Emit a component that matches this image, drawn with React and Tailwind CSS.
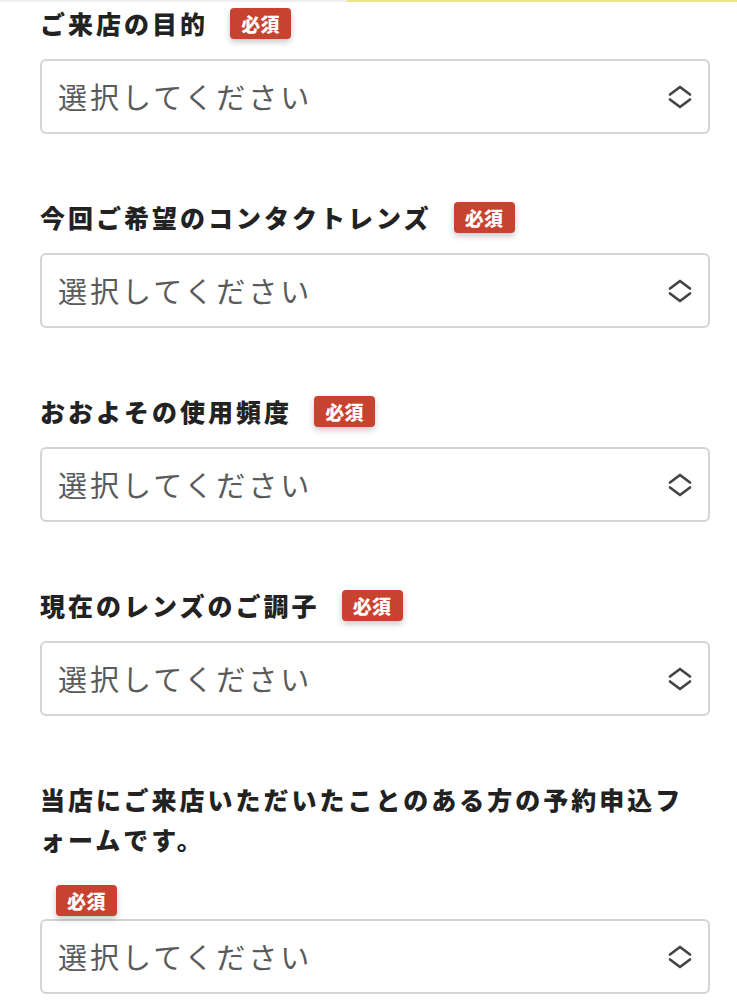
import React from "react";

const FONT = { fontFamily: '"Noto Sans CJK JP", "Noto Sans", sans-serif' };

function Badge({ className = "" }) {
  return (
    <span
      className={`inline-flex items-center justify-center h-[31px] w-[61px] rounded-[4px] bg-[#c8432f] text-white text-[19px] font-black tracking-[0.02em] leading-none shadow-[0_3px_6px_rgba(0,0,0,0.22)] ${className}`}
    >
      必須
    </span>
  );
}

function Chevrons() {
  return (
    <svg width="24" height="24" viewBox="0 0 24 24" fill="none" stroke="#444" strokeWidth="2.7" strokeLinecap="round" strokeLinejoin="round">
      <path d="M2 9.5 L12 2 L22 9.5" />
      <path d="M2 14.5 L12 22 L22 14.5" />
    </svg>
  );
}

function Select() {
  return (
    <div className="h-[75px] w-full rounded-[6px] border-2 border-[#d4d4d4] bg-white flex items-center justify-between pl-[16px] pr-[16px]">
      <span className="text-[29px] tracking-[3px] text-[#5a5a5a] font-normal leading-none">選択してください</span>
      <Chevrons />
    </div>
  );
}

function Field({ label, mt }) {
  return (
    <div className={mt}>
      <div className="flex items-center h-[40px] mb-[16px]">
        <span className="text-[25px] font-black tracking-[3px] text-[#222] leading-[40px]">{label}</span>
        <Badge className="ml-[22px]" />
      </div>
      <Select />
    </div>
  );
}

export default function App() {
  return (
    <div className="w-[737px] h-[1006px] bg-white overflow-hidden relative" style={FONT}>
      <div className="flex h-[2px] w-full">
        <div className="w-[347px] bg-[#efefef]" />
        <div className="flex-1 bg-[#ede48a]" />
      </div>
      <div className="pl-[40px] pr-[27px] pt-[1px]">
        <Field label="ご来店の目的" mt="" />
        <Field label="今回ご希望のコンタクトレンズ" mt="mt-[63px]" />
        <Field label="おおよその使用頻度" mt="mt-[63px]" />
        <Field label="現在のレンズのご調子" mt="mt-[63px]" />
        <div className="mt-[63px]">
          <p className="text-[25px] font-black tracking-[3px] text-[#222] leading-[40px]">
            当店にご来店いただいたことのある方の予約申込フォームです。
          </p>
          <div className="mt-[26px] ml-[16px]">
            <Badge />
          </div>
          <div className="mt-[3px]">
            <Select />
          </div>
        </div>
      </div>
    </div>
  );
}
